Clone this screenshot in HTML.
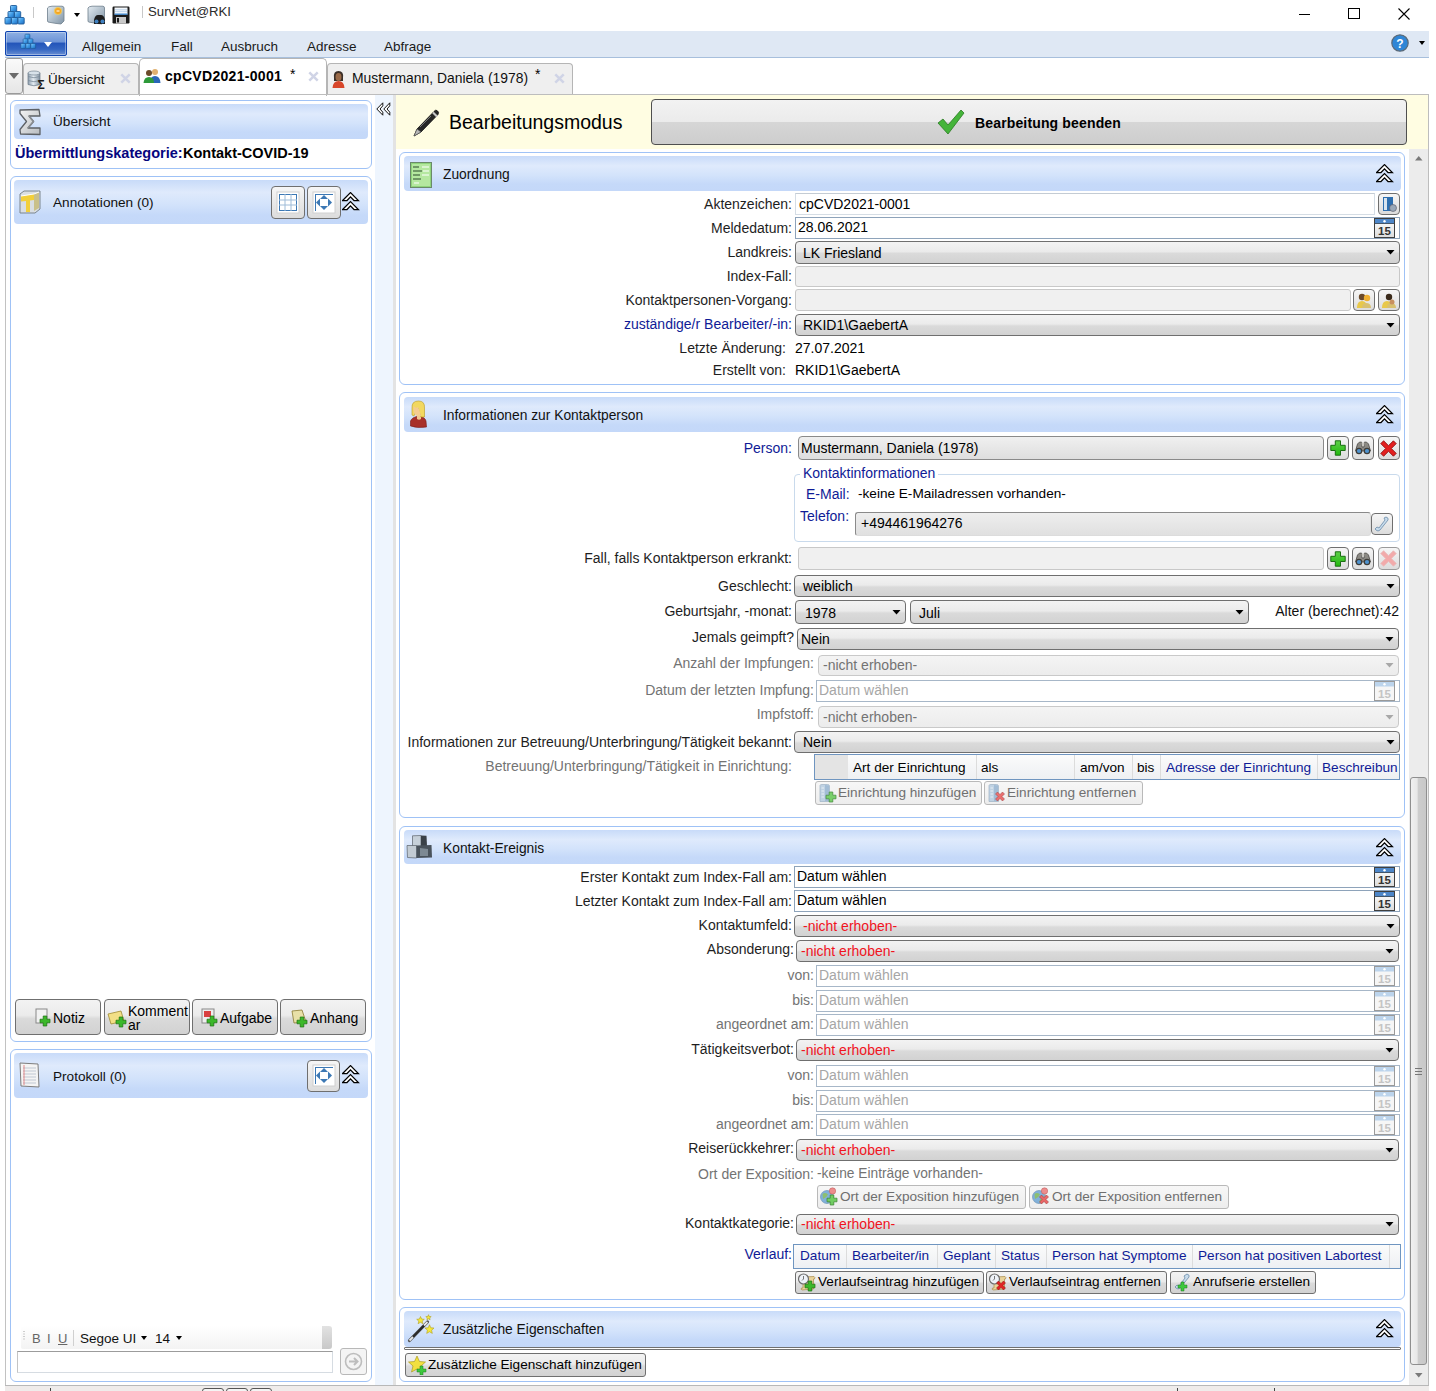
<!DOCTYPE html><html><head><meta charset="utf-8"><style>
html,body{margin:0;padding:0;width:1436px;height:1391px;overflow:hidden;background:#fff;font-family:'Liberation Sans',sans-serif}
body>div,body>svg{position:absolute;box-sizing:border-box}
.t{white-space:nowrap}
</style></head><body>
<svg style="left:0px;top:0px" width="26" height="26" viewBox="0 0 26 26"><defs><linearGradient id="lg1" x1="0" y1="0" x2="1" y2="1"><stop offset="0" stop-color="#8fd0ff"/><stop offset="0.5" stop-color="#3f9be6"/><stop offset="1" stop-color="#1f6bbf"/></linearGradient></defs><rect x="10.5" y="5.5" width="6.2" height="6.5" rx="0.8" fill="url(#lg1)" stroke="#1d5a98" stroke-width="0.9"/><rect x="8" y="11.5" width="6.2" height="6.5" rx="0.8" fill="url(#lg1)" stroke="#1d5a98" stroke-width="0.9"/><rect x="14.5" y="11.5" width="6.2" height="6.5" rx="0.8" fill="url(#lg1)" stroke="#1d5a98" stroke-width="0.9"/><rect x="5" y="17.5" width="6.2" height="6.5" rx="0.8" fill="url(#lg1)" stroke="#1d5a98" stroke-width="0.9"/><rect x="11.5" y="17.5" width="6.2" height="6.5" rx="0.8" fill="url(#lg1)" stroke="#1d5a98" stroke-width="0.9"/><rect x="18" y="17.5" width="6.2" height="6.5" rx="0.8" fill="url(#lg1)" stroke="#1d5a98" stroke-width="0.9"/></svg>
<div style="left:33px;top:7px;width:1px;height:11px;background:#c8c8c8"></div>
<svg style="left:46px;top:5px" width="19" height="20" viewBox="0 0 19 20"><defs><linearGradient id="bx" x1="0" y1="0" x2="1" y2="1"><stop offset="0" stop-color="#e4ecf2"/><stop offset="1" stop-color="#7f93a5"/></linearGradient></defs><path d="M1.5 3 Q2 1.5 6 1.2 L16 1.2 Q18 1.5 18 3 L18 16 L15 19 Q9 18.5 2 17 L1.5 16Z" fill="url(#bx)" stroke="#6d7d8b" stroke-width="0.8"/><circle cx="12" cy="6" r="3.6" fill="#f5a623" stroke="#f0d060" stroke-width="0.8"/><path d="M10.5 6 H13.5" stroke="#fff" stroke-width="1"/></svg>
<svg style="left:74px;top:13px" width="6" height="4"><path d="M0 0 L6 0 L3 4Z" fill="#000"/></svg>
<svg style="left:87px;top:5px" width="19" height="20" viewBox="0 0 19 20"><path d="M1 3 Q1.5 1.5 5 1.2 L16 1.2 Q17.5 1.5 17.5 3 L17.5 16 L15 19 Q9 18.5 1.5 17 L1 16Z" fill="url(#bx)" stroke="#6d7d8b" stroke-width="0.8"/><path d="M7 15 Q8 10 11 10 L14 10 Q17 10 18 15 L18 19 L7 19Z" fill="#1e1e1e"/><circle cx="9.5" cy="16.5" r="2" fill="#3f80c0"/><circle cx="15.5" cy="16.5" r="2" fill="#3f80c0"/></svg>
<svg style="left:112px;top:6px" width="18" height="18" viewBox="0 0 18 18"><rect x="0.5" y="0.5" width="17" height="17" rx="1.2" fill="#1a1a1a"/><rect x="2.5" y="1.5" width="13" height="7" fill="#f4f8fc"/><path d="M3 3.8 H15 M3 5.6 H15" stroke="#a8c4e4" stroke-width="0.7"/><rect x="2.5" y="7.5" width="13" height="1.3" fill="#3a86d0"/><rect x="4" y="11" width="10" height="6.5" fill="#c8c8c8"/><rect x="5" y="12" width="2" height="4.5" fill="#1a1a1a"/></svg>
<div style="left:142px;top:6px;width:1px;height:12px;background:#c8c8c8"></div>
<div class="t" style="left:148px;top:5px;font-size:13.2px;line-height:13.2px;color:#2b2b2b;font-weight:normal;">SurvNet@RKI</div>
<div style="left:1299px;top:14px;width:11px;height:1px;background:#000"></div>
<div style="left:1348px;top:8px;width:12px;height:11px;border:1px solid #000"></div>
<svg style="left:1398px;top:8px" width="12" height="12"><path d="M0.5 0.5 L11.5 11.5 M11.5 0.5 L0.5 11.5" stroke="#000" stroke-width="1.1"/></svg>
<div style="left:5px;top:31px;width:1424px;height:27px;background:#dfe8f4;border-bottom:1px solid #a7bfdc"></div>
<div style="left:5px;top:31px;width:62px;height:25px;background:linear-gradient(#8fb0e2 0%,#6e95d8 42%,#2456ba 50%,#3466c2 75%,#6a8fd2 100%);border:1px solid #0f44b0;border-radius:2px;box-shadow:inset 0 0 0 1px rgba(255,255,255,0.35)"></div>
<svg style="left:17px;top:30px" width="20" height="20" viewBox="0 0 26 26"><defs><linearGradient id="lg2" x1="0" y1="0" x2="1" y2="1"><stop offset="0" stop-color="#8fd0ff"/><stop offset="0.5" stop-color="#3f9be6"/><stop offset="1" stop-color="#1f6bbf"/></linearGradient></defs><rect x="10.5" y="5.5" width="6.2" height="6.5" rx="0.8" fill="url(#lg2)" stroke="#1d5a98" stroke-width="0.9"/><rect x="8" y="11.5" width="6.2" height="6.5" rx="0.8" fill="url(#lg2)" stroke="#1d5a98" stroke-width="0.9"/><rect x="14.5" y="11.5" width="6.2" height="6.5" rx="0.8" fill="url(#lg2)" stroke="#1d5a98" stroke-width="0.9"/><rect x="5" y="17.5" width="6.2" height="6.5" rx="0.8" fill="url(#lg2)" stroke="#1d5a98" stroke-width="0.9"/><rect x="11.5" y="17.5" width="6.2" height="6.5" rx="0.8" fill="url(#lg2)" stroke="#1d5a98" stroke-width="0.9"/><rect x="18" y="17.5" width="6.2" height="6.5" rx="0.8" fill="url(#lg2)" stroke="#1d5a98" stroke-width="0.9"/></svg>
<svg style="left:44px;top:42px" width="8" height="5"><path d="M0 0 L8 0 L4 5Z" fill="#fff"/></svg>
<div class="t" style="left:82px;top:40px;font-size:13.5px;line-height:13.5px;color:#1a1a1a;font-weight:normal;">Allgemein</div>
<div class="t" style="left:171px;top:40px;font-size:13.5px;line-height:13.5px;color:#1a1a1a;font-weight:normal;">Fall</div>
<div class="t" style="left:221px;top:40px;font-size:13.5px;line-height:13.5px;color:#1a1a1a;font-weight:normal;">Ausbruch</div>
<div class="t" style="left:307px;top:40px;font-size:13.5px;line-height:13.5px;color:#1a1a1a;font-weight:normal;">Adresse</div>
<div class="t" style="left:384px;top:40px;font-size:13.5px;line-height:13.5px;color:#1a1a1a;font-weight:normal;">Abfrage</div>
<svg style="left:1391px;top:34px" width="18" height="18" viewBox="0 0 18 18"><circle cx="9" cy="9" r="8.2" fill="#2f86d6" stroke="#5b6a78" stroke-width="1.2"/><text x="9" y="13.5" font-family="Liberation Sans" font-weight="bold" font-size="12" text-anchor="middle" fill="#fff">?</text></svg>
<svg style="left:1419px;top:41px" width="6" height="4"><path d="M0 0 L6 0 L3 4Z" fill="#000"/></svg>
<div style="left:5px;top:58px;width:18px;height:36px;border:1px solid #9a9a9a;border-radius:3px;background:linear-gradient(#fafafa,#e6e6e6)"></div>
<svg style="left:9px;top:73px" width="10" height="6"><path d="M0 0 L10 0 L5 6Z" fill="#6b6b6b"/></svg>
<div style="left:23px;top:63px;width:116px;height:32px;border:1px solid #b5b5b5;border-bottom:none;border-radius:4px 4px 0 0;background:#efefef"></div>
<svg style="left:27px;top:70px" width="20" height="19" viewBox="0 0 20 19"><defs><linearGradient id="db" x1="0" y1="0" x2="1" y2="0"><stop offset="0" stop-color="#8e9eae"/><stop offset="0.45" stop-color="#e4ecf2"/><stop offset="1" stop-color="#7e8e9e"/></linearGradient></defs><path d="M1 3 Q7 0.5 13 3 L13 14.5 Q7 17 1 14.5Z" fill="url(#db)" stroke="#6a7a88" stroke-width="0.7"/><path d="M1 6.5 Q7 9 13 6.5 M1 10.5 Q7 13 13 10.5" fill="none" stroke="#7a8a98" stroke-width="0.8"/><ellipse cx="7" cy="3" rx="6" ry="2" fill="#d8e2ea" stroke="#6a7a88" stroke-width="0.6"/><text x="14" y="18.5" font-size="12" font-family="Liberation Sans" font-weight="bold" text-anchor="middle" fill="#1a1a1a">Σ</text></svg>
<div class="t" style="left:48px;top:73px;font-size:13.4px;line-height:13.4px;color:#111;font-weight:normal;">Übersicht</div>
<svg style="left:120px;top:73px" width="11" height="11"><path d="M1.3 1.3 L9.7 9.7 M9.7 1.3 L1.3 9.7" stroke="#d0d4e6" stroke-width="2.5"/></svg>
<div style="left:139px;top:58px;width:188px;height:38px;border:1px solid #b5b5b5;border-bottom:none;border-radius:5px 5px 0 0;background:#fff"></div>
<svg style="left:143px;top:68px" width="18" height="15" viewBox="0 0 18 15"><circle cx="12" cy="4" r="3" fill="#e0b070"/><path d="M7 15 Q7 8 12 8 Q17 8 17.5 15Z" fill="#2a66b8"/><circle cx="6" cy="5" r="3" fill="#6b4a2a"/><path d="M0.5 15 Q1 9 6 9 Q11 9 11 15Z" fill="#2e9a3a"/></svg>
<div class="t" style="left:165px;top:69px;font-size:14px;line-height:14px;color:#000;font-weight:bold;letter-spacing:0.3px">cpCVD2021-0001</div>
<div class="t" style="left:290px;top:67px;font-size:14px;line-height:14px;color:#000;font-weight:normal;">*</div>
<svg style="left:308px;top:71px" width="11" height="11"><path d="M1.3 1.3 L9.7 9.7 M9.7 1.3 L1.3 9.7" stroke="#d0d4e6" stroke-width="2.5"/></svg>
<div style="left:327px;top:63px;width:246px;height:32px;border:1px solid #b5b5b5;border-bottom:none;border-radius:4px 4px 0 0;background:#efefef"></div>
<svg style="left:332px;top:70px" width="13" height="18" viewBox="0 0 13 18"><path d="M2 8 Q1 1 6.5 1 Q12 1 11 8 L11 11 L2 11Z" fill="#3b2f28"/><ellipse cx="6.5" cy="7" rx="3" ry="4" fill="#9a6a48"/><path d="M0.5 18 Q1 11 6.5 11 Q12 11 12.5 18Z" fill="#d8462a"/></svg>
<div class="t" style="left:352px;top:72px;font-size:13.9px;line-height:13.9px;color:#111;font-weight:normal;">Mustermann, Daniela (1978)</div>
<div class="t" style="left:535px;top:67px;font-size:14px;line-height:14px;color:#000;font-weight:normal;">*</div>
<svg style="left:554px;top:73px" width="11" height="11"><path d="M1.3 1.3 L9.7 9.7 M9.7 1.3 L1.3 9.7" stroke="#d0d4e6" stroke-width="2.5"/></svg>
<div style="left:5px;top:94px;width:1424px;height:1px;background:#bdbdbd"></div>
<div style="left:5px;top:95px;width:1px;height:1291px;background:#c2c2c2"></div>
<div style="left:1428px;top:94px;width:1px;height:1292px;background:#bdbdbd"></div>
<div style="left:5px;top:1385px;width:1424px;height:1px;background:#b8b8b8"></div>
<div style="left:5px;top:1386px;width:1424px;height:5px;background:#efeceb"></div>
<div style="left:50px;top:1388px;width:1px;height:3px;background:#444"></div>
<div style="left:1177px;top:1388px;width:1px;height:3px;background:#444"></div>
<div style="left:1274px;top:1388px;width:1px;height:3px;background:#444"></div>
<div style="left:202px;top:1388px;width:22px;height:6px;border:1px solid #555;border-radius:3px;background:#f4f4f4"></div>
<div style="left:226px;top:1388px;width:22px;height:6px;border:1px solid #555;border-radius:3px;background:#f4f4f4"></div>
<div style="left:250px;top:1388px;width:22px;height:6px;border:1px solid #555;border-radius:3px;background:#f4f4f4"></div>
<div style="left:10px;top:100px;width:362px;height:69px;border:1px solid #9fc2f6;border-radius:6px;background:#fff"></div>
<div style="left:14px;top:104px;width:354px;height:35px;background:linear-gradient(#c8dbf9 0%, #dfeafc 28%, #d3e3fb 55%, #c5d9f9 80%, #c4d8f9 100%);border-radius:4px"></div>
<svg style="left:18px;top:108px" width="24" height="28" viewBox="0 0 24 28"><defs><linearGradient id="sg" x1="0" y1="0" x2="1" y2="1"><stop offset="0" stop-color="#f4f4f4"/><stop offset="1" stop-color="#b8bcc0"/></linearGradient></defs><path d="M2 2 L21 1.5 L22 8 L11 8 L15.5 13.5 L10 20 L22 20 L22 26.5 L2.5 26 L2 21.5 L8.5 13.5 L2 5.5Z" fill="url(#sg)" stroke="#5d6166" stroke-width="1.3" stroke-linejoin="round"/><path d="M11 8 L15.5 13.5 L10 20" fill="none" stroke="#8a8e92" stroke-width="1.5"/></svg>
<div class="t" style="left:53px;top:115px;font-size:13.6px;line-height:13.6px;color:#111;font-weight:normal;">Übersicht</div>
<div class="t" style="left:15px;top:146px;font-size:14.5px;line-height:14.5px;color:#06067e;font-weight:bold;">Übermittlungskategorie:</div>
<div class="t" style="left:183px;top:146px;font-size:14.5px;line-height:14.5px;color:#000;font-weight:bold;">Kontakt-COVID-19</div>
<div style="left:10px;top:176px;width:362px;height:866px;border:1px solid #9fc2f6;border-radius:6px;background:#fff"></div>
<div style="left:14px;top:180px;width:354px;height:44px;background:linear-gradient(#c8dbf9 0%, #dfeafc 28%, #d3e3fb 55%, #c5d9f9 80%, #c4d8f9 100%);border-radius:4px"></div>
<svg style="left:18px;top:189px" width="24" height="26" viewBox="0 0 24 26"><path d="M2 5 L6 2 L22 2 L22 20 L17 24 L2 24Z" fill="#d9dee3" stroke="#7b858d" stroke-width="1"/><path d="M3 7 L16 5 L16 11 L12 11.5 L12 23 L8 23 L8 12 L3 12.5Z" fill="#f2cf3a"/><path d="M16 5 L21 3 L21 19 L16 22Z" fill="#c9c08a"/><path d="M3 7 L16 5 L21 3" fill="none" stroke="#fff" stroke-width="1"/></svg>
<div class="t" style="left:53px;top:196px;font-size:13.6px;line-height:13.6px;color:#111;font-weight:normal;">Annotationen (0)</div>
<div style="left:271px;top:186px;width:34px;height:33px;border:1px solid #6f6f6f;border-radius:4px;background:linear-gradient(#f6f6f6,#dcdcdc)"></div>
<svg style="left:276px;top:191px" width="24" height="23" viewBox="0 0 24 23"><rect x="1" y="1" width="22" height="21" fill="#fff" stroke="#d0d0d0"/><g stroke="#3c78b4" stroke-width="1"><path d="M3 3.5 H21 M3 19.5 H21 M3.5 3 V20 M20.5 3 V20"/></g><g stroke="#9fbcd8" stroke-width="1"><path d="M3 9 H21 M3 14 H21 M9 3 V20 M15 3 V20"/></g></svg>
<div style="left:307px;top:186px;width:34px;height:33px;border:1px solid #6f6f6f;border-radius:4px;background:linear-gradient(#f6f6f6,#dcdcdc)"></div>
<svg style="left:312px;top:191px" width="24" height="23" viewBox="0 0 24 23"><rect x="1" y="1" width="22" height="21" fill="#fff" stroke="#d0d0d0"/><path d="M3 3.5 H21 M3.5 3 V20" stroke="#3c78b4"/><path d="M12 4 L16 8 L8 8Z M12 19 L16 15 L8 15Z M4 11.5 L8 7.5 L8 15.5Z M20 11.5 L16 7.5 L16 15.5Z" fill="#3c78b4"/></svg>
<svg style="left:342px;top:192px" width="18" height="19" viewBox="0 0 18 19"><path d="M0.6 8.5 L8.5 0.6 L16.4 8.5 L12 8.5 L8.5 4.9 L5 8.5 Z" fill="#fff" stroke="#000" stroke-width="1.25" stroke-linejoin="miter"/><path d="M0.6 17.5 L8.5 9.6 L16.4 17.5 L12 17.5 L8.5 13.9 L5 17.5 Z" fill="#fff" stroke="#000" stroke-width="1.25" stroke-linejoin="miter"/></svg>
<div style="left:15px;top:999px;width:86px;height:36px;border:1px solid #6f6f6f;border-radius:4px;background:linear-gradient(#f3f3f3 0%, #ebebeb 45%, #dadada 55%, #d2d2d2 100%)"></div>
<div style="left:104px;top:999px;width:86px;height:36px;border:1px solid #6f6f6f;border-radius:4px;background:linear-gradient(#f3f3f3 0%, #ebebeb 45%, #dadada 55%, #d2d2d2 100%)"></div>
<div style="left:192px;top:999px;width:86px;height:36px;border:1px solid #6f6f6f;border-radius:4px;background:linear-gradient(#f3f3f3 0%, #ebebeb 45%, #dadada 55%, #d2d2d2 100%)"></div>
<div style="left:280px;top:999px;width:86px;height:36px;border:1px solid #6f6f6f;border-radius:4px;background:linear-gradient(#f3f3f3 0%, #ebebeb 45%, #dadada 55%, #d2d2d2 100%)"></div>
<svg style="left:35px;top:1008px" width="14" height="16"><rect x="1" y="1" width="11" height="14" fill="#f2f2f2" stroke="#888"/></svg><svg style="left:39px;top:1015px" width="12" height="12" viewBox="0 0 12 12"><path d="M4.2 1 H7.8 V4.2 H11 V7.8 H7.8 V11 H4.2 V7.8 H1 V4.2 H4.2Z" fill="#3cb82a" stroke="#1a7010" stroke-width="0.7" stroke-linejoin="round"/></svg>
<div class="t" style="left:53px;top:1011px;font-size:14px;line-height:14px;color:#000;font-weight:normal;">Notiz</div>
<svg style="left:107px;top:1010px" width="18" height="15"><path d="M1 4 L14 1 L17 11 L4 14Z" fill="#f2df86" stroke="#a08a30" stroke-width="0.8"/></svg><svg style="left:115px;top:1016px" width="12" height="12" viewBox="0 0 12 12"><path d="M4.2 1 H7.8 V4.2 H11 V7.8 H7.8 V11 H4.2 V7.8 H1 V4.2 H4.2Z" fill="#3cb82a" stroke="#1a7010" stroke-width="0.7" stroke-linejoin="round"/></svg>
<div class="t" style="left:128px;top:1004px;font-size:14px;line-height:14px;color:#000;font-weight:normal;">Komment</div>
<div class="t" style="left:128px;top:1018px;font-size:14px;line-height:14px;color:#000;font-weight:normal;">ar</div>
<svg style="left:201px;top:1008px" width="15" height="16"><rect x="1" y="1" width="12" height="14" fill="#eee" stroke="#888"/><rect x="3" y="3" width="7" height="6" fill="#d94040"/></svg><svg style="left:206px;top:1015px" width="12" height="12" viewBox="0 0 12 12"><path d="M4.2 1 H7.8 V4.2 H11 V7.8 H7.8 V11 H4.2 V7.8 H1 V4.2 H4.2Z" fill="#3cb82a" stroke="#1a7010" stroke-width="0.7" stroke-linejoin="round"/></svg>
<div class="t" style="left:220px;top:1011px;font-size:14px;line-height:14px;color:#000;font-weight:normal;">Aufgabe</div>
<svg style="left:290px;top:1009px" width="17" height="15"><path d="M2 2 L12 1 L16 13 L4 14Z" fill="#e8e0a8" stroke="#8a7a30" stroke-width="0.8"/></svg><svg style="left:296px;top:1016px" width="12" height="12" viewBox="0 0 12 12"><path d="M4.2 1 H7.8 V4.2 H11 V7.8 H7.8 V11 H4.2 V7.8 H1 V4.2 H4.2Z" fill="#3cb82a" stroke="#1a7010" stroke-width="0.7" stroke-linejoin="round"/></svg>
<div class="t" style="left:310px;top:1011px;font-size:14px;line-height:14px;color:#000;font-weight:normal;">Anhang</div>
<div style="left:10px;top:1049px;width:362px;height:333px;border:1px solid #9fc2f6;border-radius:6px;background:#fff"></div>
<div style="left:14px;top:1053px;width:354px;height:45px;background:linear-gradient(#c8dbf9 0%, #dfeafc 28%, #d3e3fb 55%, #c5d9f9 80%, #c4d8f9 100%);border-radius:4px"></div>
<svg style="left:19px;top:1062px" width="22" height="26" viewBox="0 0 22 26"><path d="M1 1 L19 2 L20 25 L2 24Z" fill="#f4f4f4" stroke="#7d7d7d" stroke-width="1"/><g stroke="#a9b4c4" stroke-width="0.7"><path d="M4 6 H17 M4 9 H17 M4 12 H17 M4 15 H17 M4 18 H17 M4 21 H17"/></g><path d="M5 3 V23" stroke="#e06060" stroke-width="0.7"/></svg>
<div class="t" style="left:53px;top:1070px;font-size:13.6px;line-height:13.6px;color:#111;font-weight:normal;">Protokoll (0)</div>
<div style="left:307px;top:1060px;width:33px;height:32px;border:1px solid #6f6f6f;border-radius:4px;background:linear-gradient(#f6f6f6,#dcdcdc)"></div>
<svg style="left:312px;top:1064px" width="24" height="23" viewBox="0 0 24 23"><rect x="1" y="1" width="22" height="21" fill="#fff" stroke="#d0d0d0"/><path d="M3 3.5 H21 M3.5 3 V20" stroke="#3c78b4"/><path d="M12 4 L16 8 L8 8Z M12 19 L16 15 L8 15Z M4 11.5 L8 7.5 L8 15.5Z M20 11.5 L16 7.5 L16 15.5Z" fill="#3c78b4"/></svg>
<svg style="left:342px;top:1065px" width="18" height="19" viewBox="0 0 18 19"><path d="M0.6 8.5 L8.5 0.6 L16.4 8.5 L12 8.5 L8.5 4.9 L5 8.5 Z" fill="#fff" stroke="#000" stroke-width="1.25" stroke-linejoin="miter"/><path d="M0.6 17.5 L8.5 9.6 L16.4 17.5 L12 17.5 L8.5 13.9 L5 17.5 Z" fill="#fff" stroke="#000" stroke-width="1.25" stroke-linejoin="miter"/></svg>
<div style="left:21px;top:1326px;width:311px;height:23px;background:linear-gradient(#ffffff,#f3f3f3);border-radius:2px"></div>
<div style="left:322px;top:1326px;width:10px;height:23px;background:linear-gradient(#e2e2e2,#c8c8c8);border-radius:0 3px 3px 0"></div>
<svg style="left:23px;top:1331px" width="2" height="9"><path d="M1 0 V9" stroke="#a0a0a0" stroke-dasharray="1 1.5"/></svg>
<div class="t" style="left:32px;top:1332px;font-size:13px;line-height:13px;color:#666;font-weight:normal;">B</div>
<div class="t" style="left:47px;top:1332px;font-size:13px;line-height:13px;color:#666;font-weight:normal;">I</div>
<div class="t" style="left:58px;top:1332px;font-size:13px;line-height:13px;color:#666;font-weight:normal;text-decoration:underline">U</div>
<div style="left:73px;top:1330px;width:1px;height:16px;background:#d0d0d0"></div>
<div class="t" style="left:80px;top:1332px;font-size:13.5px;line-height:13.5px;color:#111;font-weight:normal;">Segoe UI</div>
<svg style="left:141px;top:1336px" width="6" height="4"><path d="M0 0 L6 0 L3 4Z" fill="#000"/></svg>
<div class="t" style="left:155px;top:1332px;font-size:13.5px;line-height:13.5px;color:#111;font-weight:normal;">14</div>
<svg style="left:176px;top:1336px" width="6" height="4"><path d="M0 0 L6 0 L3 4Z" fill="#000"/></svg>
<div style="left:17px;top:1351px;width:316px;height:22px;border:1px solid #d6dce2;background:#fff;border-top-color:#9c9c9c;border-left-color:#c4c4c4"></div>
<div style="left:340px;top:1348px;width:27px;height:27px;border:1px solid #b8b8b8;border-radius:3px;background:#f4f4f4"></div>
<svg style="left:344px;top:1352px" width="19" height="19" viewBox="0 0 19 19"><circle cx="9.5" cy="9.5" r="8" fill="none" stroke="#bdbdbd" stroke-width="1.6"/><path d="M5 9.5 H13 M10 6 L13.5 9.5 L10 13" stroke="#bdbdbd" stroke-width="2" fill="none"/></svg>
<div style="left:375px;top:95px;width:18px;height:1290px;background:#eef5fe"></div>
<div style="left:393px;top:95px;width:3px;height:1290px;background:#e3e3e3"></div>
<svg style="left:376px;top:102px" width="15" height="14" viewBox="0 0 15 14"><path d="M6.8 0.8 L0.8 7 L6.8 13.2 L6.8 10.2 L4 7 L6.8 3.8 Z M13.8 0.8 L7.8 7 L13.8 13.2 L13.8 10.2 L11 7 L13.8 3.8 Z" fill="#fff" stroke="#111" stroke-width="1" stroke-linejoin="miter"/></svg>
<div style="left:396px;top:95px;width:1032px;height:54px;background:#fffde2"></div>
<svg style="left:411px;top:108px" width="30" height="30" viewBox="0 0 30 30"><path d="M26 2.5 Q28.5 4 27 6.5 L10 24 L3 28 L6 21 L23 3.5 Q24.5 1.5 26 2.5Z" fill="#262626" stroke="#111" stroke-width="0.8"/><path d="M22 4.5 L26 8.5" stroke="#c8c8c8" stroke-width="2.2"/><path d="M9 19 L20 8" stroke="#777" stroke-width="1"/><path d="M6 21 L3 28 L10 24Z" fill="#b8b8b8" stroke="#555" stroke-width="0.6"/></svg>
<div class="t" style="left:449px;top:113px;font-size:19.5px;line-height:19.5px;color:#000;font-weight:normal;">Bearbeitungsmodus</div>
<div style="left:651px;top:99px;width:756px;height:46px;border:1px solid #4f4f4f;border-radius:4px;background:linear-gradient(#f2f2f2 0%,#ebebeb 50%,#d6d6d6 51%,#cdcdcd 100%)"></div>
<svg style="left:937px;top:109px" width="28" height="26" viewBox="0 0 28 26"><path d="M1 14 L6 10 L11 16 L24 1 L27 4 L11 25 Z" fill="#45b43a" stroke="#2a7a22" stroke-width="0.8"/></svg>
<div class="t" style="left:975px;top:116px;font-size:14px;line-height:14px;color:#000;font-weight:bold;letter-spacing:0.15px">Bearbeitung beenden</div>
<div style="left:1409px;top:149px;width:19px;height:1236px;background:#ececec"></div>
<svg style="left:1415px;top:156px" width="8" height="5"><path d="M0 4.5 L7.5 4.5 L3.75 0Z" fill="#7a7a7a"/></svg>
<svg style="left:1415px;top:1373px" width="8" height="5"><path d="M0 0 L7.5 0 L3.75 4.5Z" fill="#7a7a7a"/></svg>
<div style="left:1410px;top:777px;width:17px;height:588px;border:1px solid #8f8f8f;border-radius:3px;background:linear-gradient(90deg,#f0f0f0 0%,#e8e8e8 40%,#cdcdcd 50%,#c8c8c8 100%)"></div>
<div style="left:1415px;top:1068px;width:7px;height:1px;background:#777"></div>
<div style="left:1415px;top:1071px;width:7px;height:1px;background:#777"></div>
<div style="left:1415px;top:1074px;width:7px;height:1px;background:#777"></div>
<div style="left:399px;top:152px;width:1006px;height:233px;border:1px solid #9fc2f6;border-radius:6px;background:#fff"></div>
<div style="left:404px;top:156px;width:997px;height:35px;background:linear-gradient(#c8dbf9 0%, #dfeafc 28%, #d3e3fb 55%, #c5d9f9 80%, #c4d8f9 100%);border-radius:4px"></div>
<svg style="left:410px;top:162px" width="22" height="26" viewBox="0 0 22 26"><rect x="0.5" y="0.5" width="21" height="25" fill="#8fd47a" stroke="#6a8a6a"/><rect x="2" y="2" width="18" height="22" fill="#b5e8a0"/><g stroke="#2a4a2a" stroke-width="1.2"><path d="M3 5 H9 M3 9 H12 M3 13 H10 M3 17 H11"/></g><g stroke="#fff" stroke-width="1.2"><path d="M12 5 H19 M13 9 H19 M12 13 H19 M4 21 H9"/></g></svg>
<div class="t" style="left:443px;top:168px;font-size:13.8px;line-height:13.8px;color:#111;font-weight:normal;">Zuordnung</div>
<svg style="left:1376px;top:164px" width="18" height="19" viewBox="0 0 18 19"><path d="M0.6 8.5 L8.5 0.6 L16.4 8.5 L12 8.5 L8.5 4.9 L5 8.5 Z" fill="#fff" stroke="#000" stroke-width="1.25" stroke-linejoin="miter"/><path d="M0.6 17.5 L8.5 9.6 L16.4 17.5 L12 17.5 L8.5 13.9 L5 17.5 Z" fill="#fff" stroke="#000" stroke-width="1.25" stroke-linejoin="miter"/></svg>
<div class="t" style="right:644px;top:197px;font-size:14px;line-height:14px;color:#1e1e1e;font-weight:normal;text-align:right;">Aktenzeichen:</div>
<div style="left:795px;top:193px;width:580px;height:22px;border:1px solid #d5dde5;background:#fff;border-top-color:#c4ccd4"></div>
<div class="t" style="left:799px;top:197px;font-size:14px;line-height:14px;color:#000;font-weight:normal;">cpCVD2021-0001</div>
<div style="left:1378px;top:193px;width:22px;height:22px;border:1px solid #6f6f6f;border-radius:4px;background:linear-gradient(#f6f6f6,#dcdcdc)"></div>
<svg style="left:1382px;top:196px" width="15" height="16" viewBox="0 0 15 16"><rect x="1" y="1" width="10" height="14" fill="#2e6fb0"/><rect x="2" y="2" width="3" height="12" fill="#d8e4ef"/><circle cx="11" cy="12" r="3.5" fill="#9aa8b8" stroke="#556" stroke-width="0.6"/></svg>
<div class="t" style="right:644px;top:221px;font-size:14px;line-height:14px;color:#1e1e1e;font-weight:normal;text-align:right;">Meldedatum:</div>
<div style="left:795px;top:217px;width:605px;height:22px;border:1px solid #8ea3ba;background:#fff"></div>
<div class="t" style="left:798px;top:220px;font-size:14px;line-height:14px;color:#000;font-weight:normal;">28.06.2021</div>
<svg style="left:1374px;top:218px" width="21" height="20" viewBox="0 0 21 20"><defs><linearGradient id="cg" x1="0" y1="0" x2="0" y2="1"><stop offset="0" stop-color="#ffffff"/><stop offset="1" stop-color="#dcdcdc"/></linearGradient></defs><rect x="0.5" y="0.5" width="20" height="19" fill="url(#cg)" stroke="#3f3f3f"/><rect x="1" y="1" width="19" height="4.5" fill="#4d86c8"/><path d="M1 5.5 H20" stroke="#2a3a4a" stroke-width="0.8"/><circle cx="10.5" cy="3.2" r="1.2" fill="#fff"/><text x="10.5" y="17.3" font-family="Liberation Sans" font-size="11.5" font-weight="bold" text-anchor="middle" fill="#333">15</text></svg>
<div class="t" style="right:644px;top:245px;font-size:14px;line-height:14px;color:#1e1e1e;font-weight:normal;text-align:right;">Landkreis:</div>
<div style="left:795px;top:241px;width:605px;height:23px;border:1px solid #6f6f6f;border-radius:4px;background:linear-gradient(#f3f3f3 0%, #ebebeb 45%, #dadada 55%, #d2d2d2 100%)"></div>
<div class="t" style="left:803px;top:246px;font-size:14px;line-height:14px;color:#000;font-weight:normal;">LK Friesland</div>
<svg style="left:1386px;top:250px" width="9" height="5"><path d="M0.5 0 L8.5 0 L4.5 4.5 Z" fill="#000"/></svg>
<div class="t" style="right:644px;top:269px;font-size:14px;line-height:14px;color:#1e1e1e;font-weight:normal;text-align:right;">Index-Fall:</div>
<div style="left:795px;top:266px;width:605px;height:21px;border:1px solid #c8c8c8;border-radius:3px;background:#f0f0f0"></div>
<div class="t" style="right:644px;top:293px;font-size:14px;line-height:14px;color:#1e1e1e;font-weight:normal;text-align:right;">Kontaktpersonen-Vorgang:</div>
<div style="left:795px;top:289px;width:556px;height:22px;border:1px solid #c8c8c8;border-radius:3px;background:#f0f0f0"></div>
<div style="left:1353px;top:289px;width:22px;height:22px;border:1px solid #6f6f6f;border-radius:4px;background:linear-gradient(#f6f6f6,#dcdcdc)"></div>
<svg style="left:1356px;top:292px" width="16" height="16" viewBox="0 0 16 16"><path d="M1 16 Q1 9 6 9 Q11 9 11 16Z" fill="#e8c84a"/><circle cx="6" cy="5" r="3.2" fill="#6b4a2a"/><circle cx="11" cy="6" r="3.2" fill="#f0b030"/><path d="M6 16 Q6 11 10 11 Q15 11 15 16Z" fill="#d8c070"/></svg>
<div style="left:1378px;top:289px;width:22px;height:22px;border:1px solid #6f6f6f;border-radius:4px;background:linear-gradient(#f6f6f6,#dcdcdc)"></div>
<svg style="left:1381px;top:292px" width="16" height="16" viewBox="0 0 16 16"><path d="M1 16 Q1 9 6 9 Q11 9 11 16Z" fill="#e8c84a"/><circle cx="8" cy="5" r="3.2" fill="#3a2a1a"/><path d="M6 16 Q6 11 10 11 Q15 11 15 16Z" fill="#d8c070"/><circle cx="11" cy="10" r="2.5" fill="#c89060"/></svg>
<div class="t" style="right:644px;top:317px;font-size:14px;line-height:14px;color:#0f1b96;font-weight:normal;text-align:right;">zuständige/r Bearbeiter/-in:</div>
<div style="left:795px;top:314px;width:605px;height:22px;border:1px solid #6f6f6f;border-radius:4px;background:linear-gradient(#f3f3f3 0%, #ebebeb 45%, #dadada 55%, #d2d2d2 100%)"></div>
<div class="t" style="left:803px;top:318px;font-size:14px;line-height:14px;color:#000;font-weight:normal;">RKID1\GaebertA</div>
<svg style="left:1386px;top:323px" width="9" height="5"><path d="M0.5 0 L8.5 0 L4.5 4.5 Z" fill="#000"/></svg>
<div class="t" style="right:650px;top:341px;font-size:14px;line-height:14px;color:#1e1e1e;font-weight:normal;text-align:right;">Letzte Änderung:</div>
<div class="t" style="left:795px;top:341px;font-size:14px;line-height:14px;color:#000;font-weight:normal;">27.07.2021</div>
<div class="t" style="right:650px;top:363px;font-size:14px;line-height:14px;color:#1e1e1e;font-weight:normal;text-align:right;">Erstellt von:</div>
<div class="t" style="left:795px;top:363px;font-size:14px;line-height:14px;color:#000;font-weight:normal;">RKID1\GaebertA</div>
<div style="left:399px;top:392px;width:1006px;height:426px;border:1px solid #9fc2f6;border-radius:6px;background:#fff"></div>
<div style="left:404px;top:397px;width:997px;height:35px;background:linear-gradient(#c8dbf9 0%, #dfeafc 28%, #d3e3fb 55%, #c5d9f9 80%, #c4d8f9 100%);border-radius:4px"></div>
<svg style="left:409px;top:400px" width="20" height="28" viewBox="0 0 20 28"><path d="M10 16 Q3 17 1.5 21 L1.5 26 Q8 28.5 17.5 27 L17 21 Q16 17 10 16Z" fill="#a8302a" stroke="#7a1a14" stroke-width="0.6"/><path d="M8 15 L12 15 L12 19 Q10 20.5 8 19Z" fill="#f0c890"/><path d="M3 8 Q2.5 1 9.5 1 Q16 1 15.5 8 L15.5 17 L12 17 Q10 12 9 8 Q6 11 5 16 L3 15Z" fill="#f2d860" stroke="#b89a20" stroke-width="0.6"/><path d="M4.5 6 Q7 9 9 7 Q11 11 12 16 L8 16 Q4.5 14 4.5 10Z" fill="#f4cc90"/></svg>
<div class="t" style="left:443px;top:409px;font-size:13.8px;line-height:13.8px;color:#111;font-weight:normal;">Informationen zur Kontaktperson</div>
<svg style="left:1376px;top:405px" width="18" height="19" viewBox="0 0 18 19"><path d="M0.6 8.5 L8.5 0.6 L16.4 8.5 L12 8.5 L8.5 4.9 L5 8.5 Z" fill="#fff" stroke="#000" stroke-width="1.25" stroke-linejoin="miter"/><path d="M0.6 17.5 L8.5 9.6 L16.4 17.5 L12 17.5 L8.5 13.9 L5 17.5 Z" fill="#fff" stroke="#000" stroke-width="1.25" stroke-linejoin="miter"/></svg>
<div class="t" style="right:644px;top:441px;font-size:14px;line-height:14px;color:#0f1b96;font-weight:normal;text-align:right;">Person:</div>
<div style="left:798px;top:436px;width:526px;height:24px;border:1px solid #8a8a8a;border-radius:4px;background:linear-gradient(#f0f0f0,#dedede)"></div>
<div class="t" style="left:801px;top:441px;font-size:14px;line-height:14px;color:#000;font-weight:normal;">Mustermann, Daniela (1978)</div>
<div style="left:1327px;top:436px;width:22px;height:24px;border:1px solid #6f6f6f;border-radius:4px;background:linear-gradient(#f6f6f6,#dcdcdc)"></div>
<svg style="left:1330px;top:440px" width="16" height="16" viewBox="0 0 16 16"><defs><linearGradient id="pg" x1="0" y1="0" x2="0" y2="1"><stop offset="0" stop-color="#5fd04a"/><stop offset="1" stop-color="#22b80e"/></linearGradient></defs><path d="M5.3 0.8 H10.5 V5.3 H15.2 V10.5 H10.5 V15.2 H5.3 V10.5 H0.8 V5.3 H5.3Z" fill="url(#pg)" stroke="#1a6e12" stroke-width="1" stroke-linejoin="round"/></svg>
<div style="left:1352px;top:436px;width:22px;height:24px;border:1px solid #6f6f6f;border-radius:4px;background:linear-gradient(#f6f6f6,#dcdcdc)"></div>
<svg style="left:1355px;top:441px" width="16" height="14" viewBox="0 0 16 14"><path d="M2.5 3 Q4 0.5 6.5 1 L7 6 L9 6 L9.5 1 Q12 0.5 13.5 3 L15.5 10 L0.5 10Z" fill="#8c8a84" stroke="#4a4844" stroke-width="0.8"/><path d="M6.5 1.5 L9.5 1.5 L9 5 L7 5Z" fill="#c8c6c0"/><circle cx="4" cy="10" r="3.3" fill="#3e3c38"/><circle cx="12" cy="10" r="3.3" fill="#3e3c38"/><circle cx="4" cy="10" r="2.1" fill="#4f93cf"/><circle cx="12" cy="10" r="2.1" fill="#4f93cf"/></svg>
<div style="left:1378px;top:436px;width:22px;height:24px;border:1px solid #6f6f6f;border-radius:4px;background:linear-gradient(#f6f6f6,#dcdcdc)"></div>
<svg style="left:1380px;top:440px" width="17" height="17" viewBox="0 0 17 17"><path d="M0.8 3.6 L3.6 0.8 L8.5 5.7 L13.4 0.8 L16.2 3.6 L11.3 8.5 L16.2 13.4 L13.4 16.2 L8.5 11.3 L3.6 16.2 L0.8 13.4 L5.7 8.5Z" fill="#e31f1f" stroke="#8e1010" stroke-width="0.9" stroke-linejoin="round"/></svg>
<div style="left:794px;top:474px;width:606px;height:68px;border:1px solid #c9daec;border-radius:4px"></div>
<div style="left:800px;top:466px;width:138px;height:14px;background:#fff"></div>
<div class="t" style="left:803px;top:466px;font-size:14px;line-height:14px;color:#0f1b96;font-weight:normal;">Kontaktinformationen</div>
<div class="t" style="left:806px;top:487px;font-size:14px;line-height:14px;color:#0f1b96;font-weight:normal;">E-Mail:</div>
<div class="t" style="left:858px;top:487px;font-size:13.6px;line-height:13.6px;color:#000;font-weight:normal;">-keine E-Mailadressen vorhanden-</div>
<div class="t" style="left:800px;top:509px;font-size:14px;line-height:14px;color:#0f1b96;font-weight:normal;">Telefon:</div>
<div style="left:855px;top:512px;width:516px;height:24px;border:1px solid #8a8a8a;border-radius:3px;border-right-color:#dcdcdc;border-bottom-color:#dcdcdc;background:linear-gradient(#eeeeee,#e0e0e0)"></div>
<div class="t" style="left:861px;top:516px;font-size:14px;line-height:14px;color:#000;font-weight:normal;">+494461964276</div>
<div style="left:1371px;top:513px;width:22px;height:22px;border:1px solid #6f6f6f;border-radius:4px;background:linear-gradient(#f6f6f6,#dcdcdc)"></div>
<svg style="left:1374px;top:516px" width="16" height="16" viewBox="0 0 16 16"><path d="M12 1 Q15 2 14 4 L6 14 Q4 16 2 14 L1 13 L3 11 L5 12 L11 4 L10 2Z" fill="#c8dcec" stroke="#6a8aa8" stroke-width="0.8"/></svg>
<div class="t" style="right:644px;top:551px;font-size:14px;line-height:14px;color:#1e1e1e;font-weight:normal;text-align:right;">Fall, falls Kontaktperson erkrankt:</div>
<div style="left:798px;top:547px;width:526px;height:23px;border:1px solid #c8c8c8;border-radius:3px;background:#f0f0f0"></div>
<div style="left:1327px;top:547px;width:22px;height:23px;border:1px solid #6f6f6f;border-radius:4px;background:linear-gradient(#f6f6f6,#dcdcdc)"></div>
<svg style="left:1330px;top:551px" width="16" height="16" viewBox="0 0 16 16"><defs><linearGradient id="pg" x1="0" y1="0" x2="0" y2="1"><stop offset="0" stop-color="#5fd04a"/><stop offset="1" stop-color="#22b80e"/></linearGradient></defs><path d="M5.3 0.8 H10.5 V5.3 H15.2 V10.5 H10.5 V15.2 H5.3 V10.5 H0.8 V5.3 H5.3Z" fill="url(#pg)" stroke="#1a6e12" stroke-width="1" stroke-linejoin="round"/></svg>
<div style="left:1352px;top:547px;width:22px;height:23px;border:1px solid #6f6f6f;border-radius:4px;background:linear-gradient(#f6f6f6,#dcdcdc)"></div>
<svg style="left:1355px;top:552px" width="16" height="14" viewBox="0 0 16 14"><path d="M2.5 3 Q4 0.5 6.5 1 L7 6 L9 6 L9.5 1 Q12 0.5 13.5 3 L15.5 10 L0.5 10Z" fill="#8c8a84" stroke="#4a4844" stroke-width="0.8"/><path d="M6.5 1.5 L9.5 1.5 L9 5 L7 5Z" fill="#c8c6c0"/><circle cx="4" cy="10" r="3.3" fill="#3e3c38"/><circle cx="12" cy="10" r="3.3" fill="#3e3c38"/><circle cx="4" cy="10" r="2.1" fill="#4f93cf"/><circle cx="12" cy="10" r="2.1" fill="#4f93cf"/></svg>
<div style="left:1378px;top:547px;width:22px;height:23px;border:1px solid #9a9a9a;border-radius:4px;background:linear-gradient(#f6f6f6,#dcdcdc)"></div>
<svg style="left:1380px;top:550px" width="17" height="17" viewBox="0 0 17 17"><path d="M0.8 3.6 L3.6 0.8 L8.5 5.7 L13.4 0.8 L16.2 3.6 L11.3 8.5 L16.2 13.4 L13.4 16.2 L8.5 11.3 L3.6 16.2 L0.8 13.4 L5.7 8.5Z" fill="#f2aaaa" stroke="#e9b9b9" stroke-width="0.9" stroke-linejoin="round"/></svg>
<div class="t" style="right:644px;top:579px;font-size:14px;line-height:14px;color:#1e1e1e;font-weight:normal;text-align:right;">Geschlecht:</div>
<div style="left:794px;top:575px;width:606px;height:22px;border:1px solid #6f6f6f;border-radius:4px;background:linear-gradient(#f3f3f3 0%, #ebebeb 45%, #dadada 55%, #d2d2d2 100%)"></div>
<div class="t" style="left:803px;top:579px;font-size:14px;line-height:14px;color:#000;font-weight:normal;">weiblich</div>
<svg style="left:1386px;top:584px" width="9" height="5"><path d="M0.5 0 L8.5 0 L4.5 4.5 Z" fill="#000"/></svg>
<div class="t" style="right:644px;top:604px;font-size:14px;line-height:14px;color:#1e1e1e;font-weight:normal;text-align:right;">Geburtsjahr, -monat:</div>
<div style="left:795px;top:600px;width:111px;height:24px;border:1px solid #6f6f6f;border-radius:4px;background:linear-gradient(#f3f3f3 0%, #ebebeb 45%, #dadada 55%, #d2d2d2 100%)"></div>
<div class="t" style="left:805px;top:606px;font-size:14px;line-height:14px;color:#000;font-weight:normal;">1978</div>
<svg style="left:892px;top:610px" width="9" height="5"><path d="M0.5 0 L8.5 0 L4.5 4.5 Z" fill="#000"/></svg>
<div style="left:910px;top:600px;width:339px;height:24px;border:1px solid #6f6f6f;border-radius:4px;background:linear-gradient(#f3f3f3 0%, #ebebeb 45%, #dadada 55%, #d2d2d2 100%)"></div>
<div class="t" style="left:919px;top:606px;font-size:14px;line-height:14px;color:#000;font-weight:normal;">Juli</div>
<svg style="left:1235px;top:610px" width="9" height="5"><path d="M0.5 0 L8.5 0 L4.5 4.5 Z" fill="#000"/></svg>
<div class="t" style="right:37px;top:604px;font-size:14px;line-height:14px;color:#111;font-weight:normal;text-align:right;">Alter (berechnet):42</div>
<div class="t" style="right:642px;top:630px;font-size:14px;line-height:14px;color:#1e1e1e;font-weight:normal;text-align:right;">Jemals geimpft?</div>
<div style="left:797px;top:628px;width:602px;height:22px;border:1px solid #6f6f6f;border-radius:4px;background:linear-gradient(#f3f3f3 0%, #ebebeb 45%, #dadada 55%, #d2d2d2 100%)"></div>
<div class="t" style="left:801px;top:632px;font-size:14px;line-height:14px;color:#000;font-weight:normal;">Nein</div>
<svg style="left:1385px;top:637px" width="9" height="5"><path d="M0.5 0 L8.5 0 L4.5 4.5 Z" fill="#000"/></svg>
<div class="t" style="right:622px;top:656px;font-size:14px;line-height:14px;color:#737373;font-weight:normal;text-align:right;">Anzahl der Impfungen:</div>
<div style="left:818px;top:655px;width:581px;height:21px;border:1px solid #c9c9c9;border-radius:4px;background:linear-gradient(#f4f4f4,#ececec)"></div>
<div class="t" style="left:823px;top:658px;font-size:14px;line-height:14px;color:#737373;font-weight:normal;">-nicht erhoben-</div>
<svg style="left:1385px;top:663px" width="9" height="5"><path d="M0.5 0 L8.5 0 L4.5 4.5 Z" fill="#a8a8a8"/></svg>
<div class="t" style="right:622px;top:683px;font-size:14px;line-height:14px;color:#737373;font-weight:normal;text-align:right;">Datum der letzten Impfung:</div>
<div style="left:816px;top:680px;width:584px;height:22px;border:1px solid #a7b7c8;background:#fff"></div>
<div class="t" style="left:819px;top:683px;font-size:14px;line-height:14px;color:#a6a6a6;font-weight:normal;">Datum wählen</div>
<svg style="left:1374px;top:681px" width="21" height="20" viewBox="0 0 21 20"><rect x="0.5" y="0.5" width="20" height="19" fill="#f6f6f6" stroke="#9a9a9a"/><rect x="1" y="1" width="19" height="4.5" fill="#bcd4ec"/><circle cx="10.5" cy="3.2" r="1.2" fill="#fff"/><text x="10.5" y="17.3" font-family="Liberation Sans" font-size="11.5" font-weight="bold" text-anchor="middle" fill="#c4c4c4">15</text></svg>
<div class="t" style="right:622px;top:707px;font-size:14px;line-height:14px;color:#737373;font-weight:normal;text-align:right;">Impfstoff:</div>
<div style="left:818px;top:706px;width:581px;height:22px;border:1px solid #c9c9c9;border-radius:4px;background:linear-gradient(#f4f4f4,#ececec)"></div>
<div class="t" style="left:823px;top:710px;font-size:14px;line-height:14px;color:#737373;font-weight:normal;">-nicht erhoben-</div>
<svg style="left:1385px;top:715px" width="9" height="5"><path d="M0.5 0 L8.5 0 L4.5 4.5 Z" fill="#a8a8a8"/></svg>
<div class="t" style="right:644px;top:735px;font-size:14px;line-height:14px;color:#1e1e1e;font-weight:normal;text-align:right;">Informationen zur Betreuung/Unterbringung/Tätigkeit bekannt:</div>
<div style="left:794px;top:731px;width:606px;height:22px;border:1px solid #6f6f6f;border-radius:4px;background:linear-gradient(#f3f3f3 0%, #ebebeb 45%, #dadada 55%, #d2d2d2 100%)"></div>
<div class="t" style="left:803px;top:735px;font-size:14px;line-height:14px;color:#000;font-weight:normal;">Nein</div>
<svg style="left:1386px;top:740px" width="9" height="5"><path d="M0.5 0 L8.5 0 L4.5 4.5 Z" fill="#000"/></svg>
<div class="t" style="right:644px;top:759px;font-size:14px;line-height:14px;color:#737373;font-weight:normal;text-align:right;">Betreuung/Unterbringung/Tätigkeit in Einrichtung:</div>
<div style="left:814px;top:754px;width:586px;height:26px;border:1px solid #6f95c0;background:linear-gradient(#fbfbfb,#eef0f3)"></div>
<div style="left:815px;top:755px;width:33px;height:24px;background:#e4e4e4"></div>
<div style="left:976px;top:755px;width:1px;height:24px;background:#dcdcdc"></div>
<div style="left:1074px;top:755px;width:1px;height:24px;background:#dcdcdc"></div>
<div style="left:1132px;top:755px;width:1px;height:24px;background:#dcdcdc"></div>
<div style="left:1160px;top:755px;width:1px;height:24px;background:#dcdcdc"></div>
<div style="left:1317px;top:755px;width:1px;height:24px;background:#dcdcdc"></div>
<div class="t" style="left:853px;top:761px;font-size:13.6px;line-height:13.6px;color:#000;font-weight:normal;">Art der Einrichtung</div>
<div class="t" style="left:981px;top:761px;font-size:13.6px;line-height:13.6px;color:#000;font-weight:normal;">als</div>
<div class="t" style="left:1080px;top:761px;font-size:13.6px;line-height:13.6px;color:#000;font-weight:normal;">am/von</div>
<div class="t" style="left:1137px;top:761px;font-size:13.6px;line-height:13.6px;color:#000;font-weight:normal;">bis</div>
<div class="t" style="left:1166px;top:761px;font-size:13.6px;line-height:13.6px;color:#0f1b96;font-weight:normal;">Adresse der Einrichtung</div>
<div class="t" style="left:1322px;top:761px;font-size:13.6px;line-height:13.6px;color:#0f1b96;font-weight:normal;">Beschreibun</div>
<div style="left:815px;top:781px;width:167px;height:24px;border:1px solid #b9b9b9;border-radius:3px;background:linear-gradient(#f7f7f7,#ededed)"></div>
<svg style="left:819px;top:784px" width="18" height="19" viewBox="0 0 18 19"><g opacity="0.8"><path d="M1 1.5 Q1 0.5 3 0.5 L8.5 0.5 Q10.5 0.5 10.5 2 L10.5 17.5 L1 17.5Z" fill="#b4cbe0" stroke="#8aa4bc" stroke-width="0.7"/><path d="M6 1 L10 1.5 L10 17 L6 17Z" fill="#8fb0cf"/><path d="M2.5 4 H5 M2.5 7 H5 M2.5 10 H5 M2.5 13 H5" stroke="#e6eef6" stroke-width="1"/><path d="M10.2 8 H13.8 V11.2 H17 V14.8 H13.8 V18 H10.2 V14.8 H7 V11.2 H10.2Z" fill="#5cc84a" stroke="#1a7010" stroke-width="0.7" stroke-linejoin="round"/></g></svg>
<div class="t" style="left:838px;top:786px;font-size:13.6px;line-height:13.6px;color:#707070;font-weight:normal;">Einrichtung hinzufügen</div>
<div style="left:984px;top:781px;width:159px;height:24px;border:1px solid #b9b9b9;border-radius:3px;background:linear-gradient(#f7f7f7,#ededed)"></div>
<svg style="left:988px;top:784px" width="18" height="19" viewBox="0 0 18 19"><g opacity="0.8"><path d="M1 1.5 Q1 0.5 3 0.5 L8.5 0.5 Q10.5 0.5 10.5 2 L10.5 17.5 L1 17.5Z" fill="#b4cbe0" stroke="#8aa4bc" stroke-width="0.7"/><path d="M6 1 L10 1.5 L10 17 L6 17Z" fill="#8fb0cf"/><path d="M2.5 4 H5 M2.5 7 H5 M2.5 10 H5 M2.5 13 H5" stroke="#e6eef6" stroke-width="1"/><path d="M7.5 10 L9.5 8 L12 10.5 L14.5 8 L16.5 10 L14 12.5 L16.5 15 L14.5 17 L12 14.5 L9.5 17 L7.5 15 L10 12.5Z" fill="#e85050" stroke="#8a1010" stroke-width="0.5" stroke-linejoin="round"/></g></svg>
<div class="t" style="left:1007px;top:786px;font-size:13.6px;line-height:13.6px;color:#707070;font-weight:normal;">Einrichtung entfernen</div>
<div style="left:399px;top:826px;width:1006px;height:474px;border:1px solid #9fc2f6;border-radius:6px;background:#fff"></div>
<div style="left:404px;top:830px;width:997px;height:34px;background:linear-gradient(#c8dbf9 0%, #dfeafc 28%, #d3e3fb 55%, #c5d9f9 80%, #c4d8f9 100%);border-radius:4px"></div>
<svg style="left:406px;top:834px" width="27" height="26" viewBox="0 0 27 26"><path d="M6.5 1.8 L15 1.5 L15 13 L6.5 13Z" fill="#c6d0d9" stroke="#5a626a" stroke-width="0.7"/><path d="M15 1.5 L20.5 1.8 L21 12 L15 13Z" fill="#3a4148"/><path d="M1 11.5 L10.5 11.5 L10.5 24 L1.5 23.5Z" fill="#c2cbd3" stroke="#5a626a" stroke-width="0.7"/><path d="M10.5 11.5 L25.5 11 L26 23.5 L10.5 24Z" fill="#49525b"/><path d="M14 14 L22 15 L22 22 L14 22Z" fill="#7d8993"/></svg>
<div class="t" style="left:443px;top:842px;font-size:13.8px;line-height:13.8px;color:#111;font-weight:normal;">Kontakt-Ereignis</div>
<svg style="left:1376px;top:838px" width="18" height="19" viewBox="0 0 18 19"><path d="M0.6 8.5 L8.5 0.6 L16.4 8.5 L12 8.5 L8.5 4.9 L5 8.5 Z" fill="#fff" stroke="#000" stroke-width="1.25" stroke-linejoin="miter"/><path d="M0.6 17.5 L8.5 9.6 L16.4 17.5 L12 17.5 L8.5 13.9 L5 17.5 Z" fill="#fff" stroke="#000" stroke-width="1.25" stroke-linejoin="miter"/></svg>
<div class="t" style="right:644px;top:870px;font-size:14px;line-height:14px;color:#1e1e1e;font-weight:normal;text-align:right;">Erster Kontakt zum Index-Fall am:</div>
<div style="left:794px;top:866px;width:606px;height:22px;border:1px solid #8ea3ba;background:#fff"></div>
<div class="t" style="left:797px;top:869px;font-size:14px;line-height:14px;color:#000;font-weight:normal;">Datum wählen</div>
<svg style="left:1374px;top:867px" width="21" height="20" viewBox="0 0 21 20"><defs><linearGradient id="cg" x1="0" y1="0" x2="0" y2="1"><stop offset="0" stop-color="#ffffff"/><stop offset="1" stop-color="#dcdcdc"/></linearGradient></defs><rect x="0.5" y="0.5" width="20" height="19" fill="url(#cg)" stroke="#3f3f3f"/><rect x="1" y="1" width="19" height="4.5" fill="#4d86c8"/><path d="M1 5.5 H20" stroke="#2a3a4a" stroke-width="0.8"/><circle cx="10.5" cy="3.2" r="1.2" fill="#fff"/><text x="10.5" y="17.3" font-family="Liberation Sans" font-size="11.5" font-weight="bold" text-anchor="middle" fill="#333">15</text></svg>
<div class="t" style="right:644px;top:894px;font-size:14px;line-height:14px;color:#1e1e1e;font-weight:normal;text-align:right;">Letzter Kontakt zum Index-Fall am:</div>
<div style="left:794px;top:890px;width:606px;height:22px;border:1px solid #8ea3ba;background:#fff"></div>
<div class="t" style="left:797px;top:893px;font-size:14px;line-height:14px;color:#000;font-weight:normal;">Datum wählen</div>
<svg style="left:1374px;top:891px" width="21" height="20" viewBox="0 0 21 20"><defs><linearGradient id="cg" x1="0" y1="0" x2="0" y2="1"><stop offset="0" stop-color="#ffffff"/><stop offset="1" stop-color="#dcdcdc"/></linearGradient></defs><rect x="0.5" y="0.5" width="20" height="19" fill="url(#cg)" stroke="#3f3f3f"/><rect x="1" y="1" width="19" height="4.5" fill="#4d86c8"/><path d="M1 5.5 H20" stroke="#2a3a4a" stroke-width="0.8"/><circle cx="10.5" cy="3.2" r="1.2" fill="#fff"/><text x="10.5" y="17.3" font-family="Liberation Sans" font-size="11.5" font-weight="bold" text-anchor="middle" fill="#333">15</text></svg>
<div class="t" style="right:644px;top:918px;font-size:14px;line-height:14px;color:#1e1e1e;font-weight:normal;text-align:right;">Kontaktumfeld:</div>
<div style="left:794px;top:915px;width:606px;height:22px;border:1px solid #6f6f6f;border-radius:4px;background:linear-gradient(#f3f3f3 0%, #ebebeb 45%, #dadada 55%, #d2d2d2 100%)"></div>
<div class="t" style="left:803px;top:919px;font-size:14px;line-height:14px;color:#f0141e;font-weight:normal;">-nicht erhoben-</div>
<svg style="left:1386px;top:924px" width="9" height="5"><path d="M0.5 0 L8.5 0 L4.5 4.5 Z" fill="#000"/></svg>
<div class="t" style="right:642px;top:942px;font-size:14px;line-height:14px;color:#1e1e1e;font-weight:normal;text-align:right;">Absonderung:</div>
<div style="left:796px;top:940px;width:603px;height:22px;border:1px solid #6f6f6f;border-radius:4px;background:linear-gradient(#f3f3f3 0%, #ebebeb 45%, #dadada 55%, #d2d2d2 100%)"></div>
<div class="t" style="left:801px;top:944px;font-size:14px;line-height:14px;color:#f0141e;font-weight:normal;">-nicht erhoben-</div>
<svg style="left:1385px;top:949px" width="9" height="5"><path d="M0.5 0 L8.5 0 L4.5 4.5 Z" fill="#000"/></svg>
<div class="t" style="right:622px;top:968px;font-size:14px;line-height:14px;color:#737373;font-weight:normal;text-align:right;">von:</div>
<div style="left:816px;top:965px;width:584px;height:22px;border:1px solid #a7b7c8;background:#fff"></div>
<div class="t" style="left:819px;top:968px;font-size:14px;line-height:14px;color:#a6a6a6;font-weight:normal;">Datum wählen</div>
<svg style="left:1374px;top:966px" width="21" height="20" viewBox="0 0 21 20"><rect x="0.5" y="0.5" width="20" height="19" fill="#f6f6f6" stroke="#9a9a9a"/><rect x="1" y="1" width="19" height="4.5" fill="#bcd4ec"/><circle cx="10.5" cy="3.2" r="1.2" fill="#fff"/><text x="10.5" y="17.3" font-family="Liberation Sans" font-size="11.5" font-weight="bold" text-anchor="middle" fill="#c4c4c4">15</text></svg>
<div class="t" style="right:622px;top:993px;font-size:14px;line-height:14px;color:#737373;font-weight:normal;text-align:right;">bis:</div>
<div style="left:816px;top:990px;width:584px;height:22px;border:1px solid #a7b7c8;background:#fff"></div>
<div class="t" style="left:819px;top:993px;font-size:14px;line-height:14px;color:#a6a6a6;font-weight:normal;">Datum wählen</div>
<svg style="left:1374px;top:991px" width="21" height="20" viewBox="0 0 21 20"><rect x="0.5" y="0.5" width="20" height="19" fill="#f6f6f6" stroke="#9a9a9a"/><rect x="1" y="1" width="19" height="4.5" fill="#bcd4ec"/><circle cx="10.5" cy="3.2" r="1.2" fill="#fff"/><text x="10.5" y="17.3" font-family="Liberation Sans" font-size="11.5" font-weight="bold" text-anchor="middle" fill="#c4c4c4">15</text></svg>
<div class="t" style="right:622px;top:1017px;font-size:14px;line-height:14px;color:#737373;font-weight:normal;text-align:right;">angeordnet am:</div>
<div style="left:816px;top:1014px;width:584px;height:22px;border:1px solid #a7b7c8;background:#fff"></div>
<div class="t" style="left:819px;top:1017px;font-size:14px;line-height:14px;color:#a6a6a6;font-weight:normal;">Datum wählen</div>
<svg style="left:1374px;top:1015px" width="21" height="20" viewBox="0 0 21 20"><rect x="0.5" y="0.5" width="20" height="19" fill="#f6f6f6" stroke="#9a9a9a"/><rect x="1" y="1" width="19" height="4.5" fill="#bcd4ec"/><circle cx="10.5" cy="3.2" r="1.2" fill="#fff"/><text x="10.5" y="17.3" font-family="Liberation Sans" font-size="11.5" font-weight="bold" text-anchor="middle" fill="#c4c4c4">15</text></svg>
<div class="t" style="right:642px;top:1042px;font-size:14px;line-height:14px;color:#1e1e1e;font-weight:normal;text-align:right;">Tätigkeitsverbot:</div>
<div style="left:796px;top:1039px;width:603px;height:22px;border:1px solid #6f6f6f;border-radius:4px;background:linear-gradient(#f3f3f3 0%, #ebebeb 45%, #dadada 55%, #d2d2d2 100%)"></div>
<div class="t" style="left:801px;top:1043px;font-size:14px;line-height:14px;color:#f0141e;font-weight:normal;">-nicht erhoben-</div>
<svg style="left:1385px;top:1048px" width="9" height="5"><path d="M0.5 0 L8.5 0 L4.5 4.5 Z" fill="#000"/></svg>
<div class="t" style="right:622px;top:1068px;font-size:14px;line-height:14px;color:#737373;font-weight:normal;text-align:right;">von:</div>
<div style="left:816px;top:1065px;width:584px;height:22px;border:1px solid #a7b7c8;background:#fff"></div>
<div class="t" style="left:819px;top:1068px;font-size:14px;line-height:14px;color:#a6a6a6;font-weight:normal;">Datum wählen</div>
<svg style="left:1374px;top:1066px" width="21" height="20" viewBox="0 0 21 20"><rect x="0.5" y="0.5" width="20" height="19" fill="#f6f6f6" stroke="#9a9a9a"/><rect x="1" y="1" width="19" height="4.5" fill="#bcd4ec"/><circle cx="10.5" cy="3.2" r="1.2" fill="#fff"/><text x="10.5" y="17.3" font-family="Liberation Sans" font-size="11.5" font-weight="bold" text-anchor="middle" fill="#c4c4c4">15</text></svg>
<div class="t" style="right:622px;top:1093px;font-size:14px;line-height:14px;color:#737373;font-weight:normal;text-align:right;">bis:</div>
<div style="left:816px;top:1090px;width:584px;height:22px;border:1px solid #a7b7c8;background:#fff"></div>
<div class="t" style="left:819px;top:1093px;font-size:14px;line-height:14px;color:#a6a6a6;font-weight:normal;">Datum wählen</div>
<svg style="left:1374px;top:1091px" width="21" height="20" viewBox="0 0 21 20"><rect x="0.5" y="0.5" width="20" height="19" fill="#f6f6f6" stroke="#9a9a9a"/><rect x="1" y="1" width="19" height="4.5" fill="#bcd4ec"/><circle cx="10.5" cy="3.2" r="1.2" fill="#fff"/><text x="10.5" y="17.3" font-family="Liberation Sans" font-size="11.5" font-weight="bold" text-anchor="middle" fill="#c4c4c4">15</text></svg>
<div class="t" style="right:622px;top:1117px;font-size:14px;line-height:14px;color:#737373;font-weight:normal;text-align:right;">angeordnet am:</div>
<div style="left:816px;top:1114px;width:584px;height:22px;border:1px solid #a7b7c8;background:#fff"></div>
<div class="t" style="left:819px;top:1117px;font-size:14px;line-height:14px;color:#a6a6a6;font-weight:normal;">Datum wählen</div>
<svg style="left:1374px;top:1115px" width="21" height="20" viewBox="0 0 21 20"><rect x="0.5" y="0.5" width="20" height="19" fill="#f6f6f6" stroke="#9a9a9a"/><rect x="1" y="1" width="19" height="4.5" fill="#bcd4ec"/><circle cx="10.5" cy="3.2" r="1.2" fill="#fff"/><text x="10.5" y="17.3" font-family="Liberation Sans" font-size="11.5" font-weight="bold" text-anchor="middle" fill="#c4c4c4">15</text></svg>
<div class="t" style="right:642px;top:1141px;font-size:14px;line-height:14px;color:#1e1e1e;font-weight:normal;text-align:right;">Reiserückkehrer:</div>
<div style="left:796px;top:1139px;width:603px;height:22px;border:1px solid #6f6f6f;border-radius:4px;background:linear-gradient(#f3f3f3 0%, #ebebeb 45%, #dadada 55%, #d2d2d2 100%)"></div>
<div class="t" style="left:801px;top:1143px;font-size:14px;line-height:14px;color:#f0141e;font-weight:normal;">-nicht erhoben-</div>
<svg style="left:1385px;top:1148px" width="9" height="5"><path d="M0.5 0 L8.5 0 L4.5 4.5 Z" fill="#000"/></svg>
<div class="t" style="right:622px;top:1167px;font-size:14px;line-height:14px;color:#737373;font-weight:normal;text-align:right;">Ort der Exposition:</div>
<div class="t" style="left:817px;top:1167px;font-size:13.75px;line-height:13.75px;color:#737373;font-weight:normal;">-keine Einträge vorhanden-</div>
<div style="left:817px;top:1185px;width:209px;height:24px;border:1px solid #b9b9b9;border-radius:3px;background:linear-gradient(#f7f7f7,#ededed)"></div>
<svg style="left:820px;top:1187px" width="19" height="20" viewBox="0 0 19 20"><g opacity="0.85"><circle cx="7" cy="10" r="6.5" fill="#6ea6d6" stroke="#4a7aa4" stroke-width="0.6"/><path d="M2.5 7 Q5 5 8 7.5 Q6.5 11 3 12Z M8 12 Q11 11 12 14 Q9 16 7.5 15Z" fill="#7cb65a"/><circle cx="12.5" cy="4" r="3.2" fill="#ec7a7a" stroke="#b04040" stroke-width="0.5"/><path d="M12.5 7 V10" stroke="#999" stroke-width="0.8"/><path d="M10.2 8 H13.8 V11.2 H17 V14.8 H13.8 V18 H10.2 V14.8 H7 V11.2 H10.2Z" fill="#5cc84a" stroke="#1a7010" stroke-width="0.7" stroke-linejoin="round"/></g></svg>
<div class="t" style="left:840px;top:1190px;font-size:13.6px;line-height:13.6px;color:#6e6e6e;font-weight:normal;">Ort der Exposition hinzufügen</div>
<div style="left:1029px;top:1185px;width:200px;height:24px;border:1px solid #b9b9b9;border-radius:3px;background:linear-gradient(#f7f7f7,#ededed)"></div>
<svg style="left:1032px;top:1187px" width="19" height="20" viewBox="0 0 19 20"><g opacity="0.85"><circle cx="7" cy="10" r="6.5" fill="#6ea6d6" stroke="#4a7aa4" stroke-width="0.6"/><path d="M2.5 7 Q5 5 8 7.5 Q6.5 11 3 12Z M8 12 Q11 11 12 14 Q9 16 7.5 15Z" fill="#7cb65a"/><circle cx="12.5" cy="4" r="3.2" fill="#ec7a7a" stroke="#b04040" stroke-width="0.5"/><path d="M12.5 7 V10" stroke="#999" stroke-width="0.8"/><path d="M7.5 10 L9.5 8 L12 10.5 L14.5 8 L16.5 10 L14 12.5 L16.5 15 L14.5 17 L12 14.5 L9.5 17 L7.5 15 L10 12.5Z" fill="#e85050" stroke="#8a1010" stroke-width="0.5" stroke-linejoin="round"/></g></svg>
<div class="t" style="left:1052px;top:1190px;font-size:13.6px;line-height:13.6px;color:#6e6e6e;font-weight:normal;">Ort der Exposition entfernen</div>
<div class="t" style="right:642px;top:1216px;font-size:14px;line-height:14px;color:#1e1e1e;font-weight:normal;text-align:right;">Kontaktkategorie:</div>
<div style="left:796px;top:1214px;width:603px;height:21px;border:1px solid #6f6f6f;border-radius:4px;background:linear-gradient(#f3f3f3 0%, #ebebeb 45%, #dadada 55%, #d2d2d2 100%)"></div>
<div class="t" style="left:801px;top:1217px;font-size:14px;line-height:14px;color:#f0141e;font-weight:normal;">-nicht erhoben-</div>
<svg style="left:1385px;top:1222px" width="9" height="5"><path d="M0.5 0 L8.5 0 L4.5 4.5 Z" fill="#000"/></svg>
<div class="t" style="right:644px;top:1247px;font-size:14px;line-height:14px;color:#0f1b96;font-weight:normal;text-align:right;">Verlauf:</div>
<div style="left:793px;top:1244px;width:608px;height:25px;border:1px solid #6f95c0;background:linear-gradient(#fbfbfb,#eef0f3)"></div>
<div style="left:846px;top:1245px;width:1px;height:23px;background:#dcdcdc"></div>
<div style="left:937px;top:1245px;width:1px;height:23px;background:#dcdcdc"></div>
<div style="left:995px;top:1245px;width:1px;height:23px;background:#dcdcdc"></div>
<div style="left:1046px;top:1245px;width:1px;height:23px;background:#dcdcdc"></div>
<div style="left:1192px;top:1245px;width:1px;height:23px;background:#dcdcdc"></div>
<div style="left:1389px;top:1245px;width:1px;height:23px;background:#dcdcdc"></div>
<div class="t" style="left:800px;top:1249px;font-size:13.6px;line-height:13.6px;color:#0f1b96;font-weight:normal;">Datum</div>
<div class="t" style="left:852px;top:1249px;font-size:13.6px;line-height:13.6px;color:#0f1b96;font-weight:normal;">Bearbeiter/in</div>
<div class="t" style="left:943px;top:1249px;font-size:13.6px;line-height:13.6px;color:#0f1b96;font-weight:normal;">Geplant</div>
<div class="t" style="left:1001px;top:1249px;font-size:13.6px;line-height:13.6px;color:#0f1b96;font-weight:normal;">Status</div>
<div class="t" style="left:1052px;top:1249px;font-size:13.6px;line-height:13.6px;color:#0f1b96;font-weight:normal;">Person hat Symptome</div>
<div class="t" style="left:1198px;top:1249px;font-size:13.6px;line-height:13.6px;color:#0f1b96;font-weight:normal;">Person hat positiven Labortest</div>
<div style="left:795px;top:1271px;width:189px;height:23px;border:1px solid #6f6f6f;border-radius:3px;background:linear-gradient(#f3f3f3 0%, #ebebeb 45%, #dadada 55%, #d2d2d2 100%)"></div>
<svg style="left:798px;top:1273px" width="18" height="19" viewBox="0 0 18 19"><path d="M5 4 L16 3.5 Q17.5 4 16.5 6 L15.5 6 L15.5 16 L4 17 Q2.5 16.5 3.5 15 L5 15Z" fill="#e9d39a" stroke="#a88a48" stroke-width="0.7"/><circle cx="5.5" cy="6" r="5" fill="#eef2f8" stroke="#6e6e6e" stroke-width="1.2"/><path d="M5.5 3 V6 L4 7.5" stroke="#555" stroke-width="0.8" fill="none"/><path d="M10.2 8 H13.8 V11.2 H17 V14.8 H13.8 V18 H10.2 V14.8 H7 V11.2 H10.2Z" fill="#3cb82a" stroke="#1a7010" stroke-width="0.7" stroke-linejoin="round"/></svg>
<div class="t" style="left:818px;top:1275px;font-size:13.6px;line-height:13.6px;color:#000;font-weight:normal;">Verlaufseintrag hinzufügen</div>
<div style="left:986px;top:1271px;width:181px;height:23px;border:1px solid #6f6f6f;border-radius:3px;background:linear-gradient(#f3f3f3 0%, #ebebeb 45%, #dadada 55%, #d2d2d2 100%)"></div>
<svg style="left:989px;top:1273px" width="18" height="19" viewBox="0 0 18 19"><path d="M5 4 L16 3.5 Q17.5 4 16.5 6 L15.5 6 L15.5 16 L4 17 Q2.5 16.5 3.5 15 L5 15Z" fill="#e9d39a" stroke="#a88a48" stroke-width="0.7"/><circle cx="5.5" cy="6" r="5" fill="#eef2f8" stroke="#6e6e6e" stroke-width="1.2"/><path d="M5.5 3 V6 L4 7.5" stroke="#555" stroke-width="0.8" fill="none"/><path d="M7.5 10 L9.5 8 L12 10.5 L14.5 8 L16.5 10 L14 12.5 L16.5 15 L14.5 17 L12 14.5 L9.5 17 L7.5 15 L10 12.5Z" fill="#e02424" stroke="#8a1010" stroke-width="0.5" stroke-linejoin="round"/></svg>
<div class="t" style="left:1009px;top:1275px;font-size:13.6px;line-height:13.6px;color:#000;font-weight:normal;">Verlaufseintrag entfernen</div>
<div style="left:1170px;top:1271px;width:146px;height:23px;border:1px solid #6f6f6f;border-radius:3px;background:linear-gradient(#f3f3f3 0%, #ebebeb 45%, #dadada 55%, #d2d2d2 100%)"></div>
<svg style="left:1173px;top:1273px" width="18" height="19" viewBox="0 0 18 19"><path d="M14 1 Q17 2 16 4 L7 15 Q5 17 3 15 L2 14 L4 12 L6 13 L12 5 L11 3Z" fill="#c8dcec" stroke="#6a8aa8" stroke-width="0.8"/><path d="M8 9 H11 V12 H14 V15 H11 V18 H8 V15 H5 V12 H8Z" fill="#3ec83e" stroke="#1d7a1d" stroke-width="0.5"/></svg>
<div class="t" style="left:1193px;top:1275px;font-size:13.6px;line-height:13.6px;color:#000;font-weight:normal;">Anrufserie erstellen</div>
<div style="left:399px;top:1307px;width:1006px;height:75px;border:1px solid #9fc2f6;border-radius:6px;background:#fff"></div>
<div style="left:404px;top:1311px;width:997px;height:36px;background:linear-gradient(#c8dbf9 0%, #dfeafc 28%, #d3e3fb 55%, #c5d9f9 80%, #c4d8f9 100%);border-radius:4px"></div>
<svg style="left:406px;top:1313px" width="28" height="30" viewBox="0 0 28 30"><path d="M3.5 27.5 L21.5 9" stroke="#555" stroke-width="3.2" stroke-linecap="round"/><path d="M3.5 27.5 L21.5 9" stroke="#2a2a2a" stroke-width="2"/><path d="M3.5 27.5 L7 24" stroke="#e8e8e8" stroke-width="2"/><path d="M18 12.5 L21.5 9" stroke="#e8e8e8" stroke-width="2"/><path d="M14.5 3.5 L15.6 6.0 L18.3 6.3 L16.2 8.1 L16.9 10.7 L14.5 9.3 L12.1 10.7 L12.8 8.1 L10.7 6.3 L13.4 6.0Z" fill="#f5e83a" stroke="#b0a020" stroke-width="0.6"/><path d="M22.5 1.7 L23.2 3.5 L25.2 3.6 L23.7 4.9 L24.1 6.8 L22.5 5.8 L20.9 6.8 L21.3 4.9 L19.8 3.6 L21.8 3.5Z" fill="#f5e83a" stroke="#b0a020" stroke-width="0.6"/><path d="M23.5 11.7 L24.8 14.8 L28.1 15.0 L25.6 17.2 L26.3 20.4 L23.5 18.7 L20.7 20.4 L21.4 17.2 L18.9 15.0 L22.2 14.8Z" fill="#f5e83a" stroke="#b0a020" stroke-width="0.6"/></svg>
<div class="t" style="left:443px;top:1323px;font-size:13.8px;line-height:13.8px;color:#111;font-weight:normal;">Zusätzliche Eigenschaften</div>
<svg style="left:1376px;top:1319px" width="18" height="19" viewBox="0 0 18 19"><path d="M0.6 8.5 L8.5 0.6 L16.4 8.5 L12 8.5 L8.5 4.9 L5 8.5 Z" fill="#fff" stroke="#000" stroke-width="1.25" stroke-linejoin="miter"/><path d="M0.6 17.5 L8.5 9.6 L16.4 17.5 L12 17.5 L8.5 13.9 L5 17.5 Z" fill="#fff" stroke="#000" stroke-width="1.25" stroke-linejoin="miter"/></svg>
<div style="left:404px;top:1347px;width:997px;height:3px;border:1px solid #707070;border-radius:1px;background:#fff"></div>
<div style="left:405px;top:1353px;width:241px;height:24px;border:1px solid #6f6f6f;border-radius:3px;background:linear-gradient(#f3f3f3 0%, #ebebeb 45%, #dadada 55%, #d2d2d2 100%)"></div>
<svg style="left:408px;top:1355px" width="20" height="20" viewBox="0 0 20 20"><path d="M9 1 L11.5 6.5 L17.5 7 L13 11 L14.5 17 L9 14 L3.5 17 L5 11 L0.5 7 L6.5 6.5Z" fill="#f2e040" stroke="#a09010" stroke-width="0.6"/><path d="M12 11 H15 V14 H18 V17 H15 V20 H12 V17 H9 V14 H12Z" fill="#3ec83e" stroke="#1d7a1d" stroke-width="0.5"/></svg>
<div class="t" style="left:428px;top:1358px;font-size:13.6px;line-height:13.6px;color:#000;font-weight:normal;">Zusätzliche Eigenschaft hinzufügen</div>
</body></html>
